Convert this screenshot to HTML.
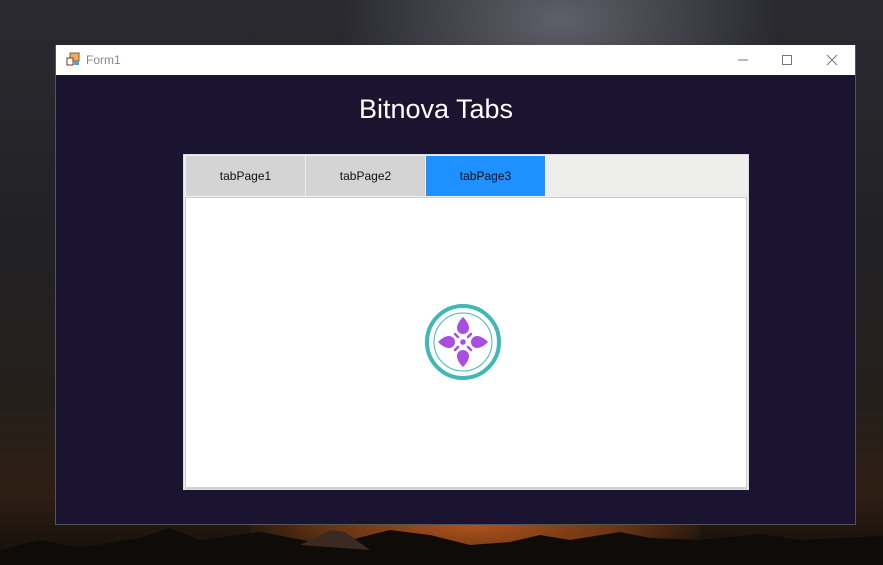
<!DOCTYPE html>
<html style="background:#141414"><head><meta charset="utf-8"><style>
html,body{margin:0;width:883px;height:565px;overflow:hidden;}
body{position:relative;font-family:"Liberation Sans",sans-serif;
background:radial-gradient(ellipse 220px 120px at 560px 20px,rgba(140,140,155,0.55),transparent),linear-gradient(180deg,#2a2a30 0%,#222226 40%,#241f1b 70%,#2e1e14 88%,#120d0a 100%);}
.glow{position:absolute;left:250px;top:515px;width:450px;height:60px;background:radial-gradient(ellipse at 50% 15%,#b0541c 0%,#6a3414 45%,transparent 75%);}
.win{position:absolute;left:55px;top:45px;width:801px;height:480px;background:#1b1430;border:1px solid #555;border-top:none;box-sizing:border-box;}
.tb{position:absolute;left:0;top:0;width:100%;height:30px;background:#fff;}
.tb .t{position:absolute;left:30px;top:8px;font-size:12px;color:#888;}
.title{position:absolute;left:301px;width:158px;top:49px;text-align:center;color:#fff;font-size:27px;white-space:nowrap;}
.tc{position:absolute;left:127px;top:109px;width:566px;height:336px;background:#eeeeec;box-sizing:border-box;border:1px solid #ddd;}
.tab{position:absolute;top:1px;width:119px;height:40px;background:#d3d4d3;font-size:12px;line-height:40px;text-align:center;color:#111;}
.page{position:absolute;left:1px;top:42px;width:562px;height:292px;background:#fff;border:1px solid #ccc;border-bottom:2px solid #d0d0d0;box-sizing:border-box;}
</style></head><body>
<div class="glow"></div>
<svg style="position:absolute;left:0;top:510px" width="883" height="55"><path d="M0 40 L40 30 L80 38 L140 28 L170 18 L200 30 L260 22 L330 35 L390 20 L430 25 L470 35 L510 32 L540 25 L570 30 L620 22 L650 28 L700 30 L760 24 L800 30 L883 26 L883 55 L0 55Z" fill="#0f0b09"/><path d="M300 35 L330 20 L345 22 L370 40Z" fill="#3a2a22"/></svg>
<div class="win">
<div class="tb">
<svg style="position:absolute;left:10px;top:7px" width="14" height="14"><rect x="4" y="1" width="9" height="8" fill="#e3b070" stroke="#8a5a20"/><rect x="1" y="6" width="6" height="7" fill="#fff" stroke="#7a3a10"/><rect x="8" y="9" width="5" height="4" fill="#4aa0e0"/></svg>
<div class="t">Form1</div>
<svg style="position:absolute;left:680px;top:8px" width="110" height="14"><line x1="2" y1="7" x2="12" y2="7" stroke="#777"/><rect x="46.5" y="2.5" width="9" height="9" fill="none" stroke="#777"/><path d="M91 2 L101 12 M101 2 L91 12" stroke="#777"/></svg>
</div>
<div class="title">Bitnova Tabs</div>
<div class="tc">
<div class="tab" style="left:2px">tabPage1</div>
<div class="tab" style="left:122px">tabPage2</div>
<div class="tab" style="left:242px;background:#1e90ff">tabPage3</div>
<div class="page"></div>
</div>
</div>
<svg style="position:absolute;left:424px;top:303px" width="78" height="78" viewBox="0 0 78 78">
<circle cx="39" cy="39" r="36" fill="none" stroke="#3fb8b6" stroke-width="4"/>
<circle cx="39" cy="39" r="29" fill="none" stroke="#3fb8b6" stroke-width="1"/>
<g fill="#a94fe0">
<path d="M39 14 C42 17 45 21 45 25 A6 6 0 0 1 33 25 C33 21 36 17 39 14Z"/>
<path d="M39 14 C42 17 45 21 45 25 A6 6 0 0 1 33 25 C33 21 36 17 39 14Z" transform="rotate(90 39 39)"/>
<path d="M39 14 C42 17 45 21 45 25 A6 6 0 0 1 33 25 C33 21 36 17 39 14Z" transform="rotate(180 39 39)"/>
<path d="M39 14 C42 17 45 21 45 25 A6 6 0 0 1 33 25 C33 21 36 17 39 14Z" transform="rotate(270 39 39)"/>
<circle cx="39" cy="39" r="2.8"/>
</g>
<g stroke="#a94fe0" stroke-width="2.5" stroke-linecap="round"><path d="M31 31 L34 34 M47 31 L44 34 M31 47 L34 44 M47 47 L44 44"/></g>
</svg>
</body></html>
